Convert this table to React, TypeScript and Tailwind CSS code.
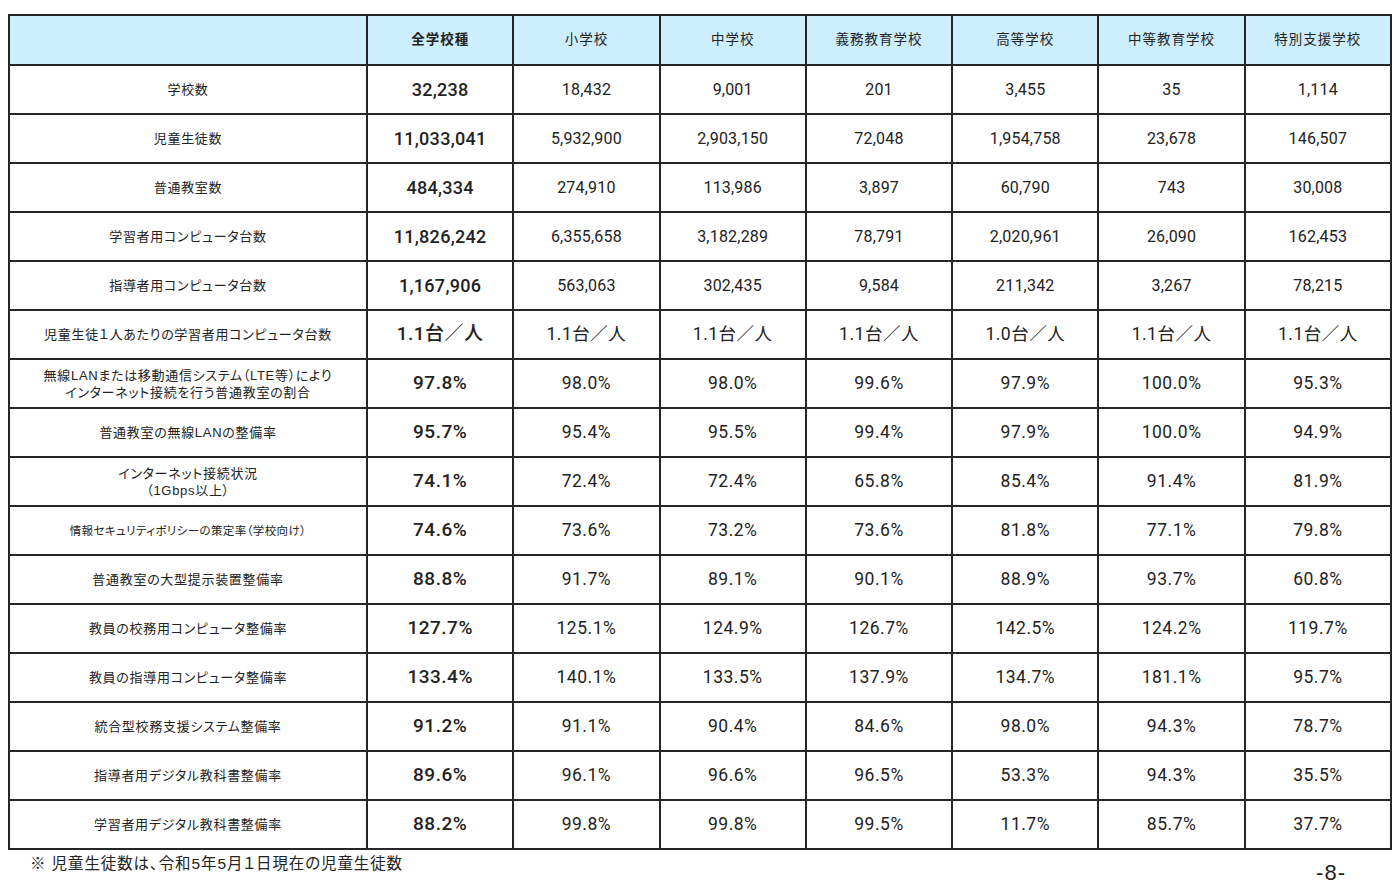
import React from 'react';

const columns = ['全学校種', '小学校', '中学校', '義務教育学校', '高等学校', '中等教育学校', '特別支援学校'];

interface Row {
  label: string[];
  values: string[];
  kind: 'count' | 'rate';
  small?: boolean;
}

const rows: Row[] = [
  { label: ['学校数'], kind: 'count', values: ['32,238', '18,432', '9,001', '201', '3,455', '35', '1,114'] },
  { label: ['児童生徒数'], kind: 'count', values: ['11,033,041', '5,932,900', '2,903,150', '72,048', '1,954,758', '23,678', '146,507'] },
  { label: ['普通教室数'], kind: 'count', values: ['484,334', '274,910', '113,986', '3,897', '60,790', '743', '30,008'] },
  { label: ['学習者用コンピュータ台数'], kind: 'count', values: ['11,826,242', '6,355,658', '3,182,289', '78,791', '2,020,961', '26,090', '162,453'] },
  { label: ['指導者用コンピュータ台数'], kind: 'count', values: ['1,167,906', '563,063', '302,435', '9,584', '211,342', '3,267', '78,215'] },
  { label: ['児童生徒１人あたりの学習者用コンピュータ台数'], kind: 'rate', values: ['1.1台／人', '1.1台／人', '1.1台／人', '1.1台／人', '1.0台／人', '1.1台／人', '1.1台／人'] },
  { label: ['無線LANまたは移動通信システム（LTE等）により', 'インターネット接続を行う普通教室の割合'], kind: 'rate', values: ['97.8%', '98.0%', '98.0%', '99.6%', '97.9%', '100.0%', '95.3%'] },
  { label: ['普通教室の無線LANの整備率'], kind: 'rate', values: ['95.7%', '95.4%', '95.5%', '99.4%', '97.9%', '100.0%', '94.9%'] },
  { label: ['インターネット接続状況', '（1Gbps以上）'], kind: 'rate', values: ['74.1%', '72.4%', '72.4%', '65.8%', '85.4%', '91.4%', '81.9%'] },
  { label: ['情報セキュリティポリシーの策定率（学校向け）'], kind: 'rate', small: true, values: ['74.6%', '73.6%', '73.2%', '73.6%', '81.8%', '77.1%', '79.8%'] },
  { label: ['普通教室の大型提示装置整備率'], kind: 'rate', values: ['88.8%', '91.7%', '89.1%', '90.1%', '88.9%', '93.7%', '60.8%'] },
  { label: ['教員の校務用コンピュータ整備率'], kind: 'rate', values: ['127.7%', '125.1%', '124.9%', '126.7%', '142.5%', '124.2%', '119.7%'] },
  { label: ['教員の指導用コンピュータ整備率'], kind: 'rate', values: ['133.4%', '140.1%', '133.5%', '137.9%', '134.7%', '181.1%', '95.7%'] },
  { label: ['統合型校務支援システム整備率'], kind: 'rate', values: ['91.2%', '91.1%', '90.4%', '84.6%', '98.0%', '94.3%', '78.7%'] },
  { label: ['指導者用デジタル教科書整備率'], kind: 'rate', values: ['89.6%', '96.1%', '96.6%', '96.5%', '53.3%', '94.3%', '35.5%'] },
  { label: ['学習者用デジタル教科書整備率'], kind: 'rate', values: ['88.2%', '99.8%', '99.8%', '99.5%', '11.7%', '85.7%', '37.7%'] },
];

const App: React.FC = () => {
  return (
    <div className="w-[1400px] h-[886px] bg-white text-[#222] font-['Liberation_Sans','Noto_Sans_CJK_JP',sans-serif] pt-[14px] pl-[8px]">
      {/* 表 */}
      <div className="w-[1384px] grid grid-cols-[356px_repeat(7,minmax(0,1fr))] gap-[2px] p-[2px] bg-[#262626]">
        <div className="h-[48px] bg-[#cdeefd]" />
        {columns.map((col, i) => (
          <div
            key={col}
            className={`h-[48px] bg-[#cdeefd] flex items-center justify-center text-[13.5px] tracking-[1px] [font-feature-settings:'palt'] ${
              i === 0 ? 'font-bold' : ''
            }`}
          >
            {col}
          </div>
        ))}

        {rows.map((row) => (
          <React.Fragment key={row.label.join('')}>
            <div
              className={`h-[47px] bg-white flex flex-col items-center justify-center text-center [font-feature-settings:'palt'] ${
                row.small ? 'text-[11.5px] tracking-[0.4px] leading-[16px]' : 'text-[13px] tracking-[0.7px] leading-[17px]'
              }`}
            >
              {row.label.map((line) => (
                <span key={line}>{line}</span>
              ))}
            </div>
            {row.values.map((v, i) => (
              <div
                key={i}
                className={`h-[47px] bg-white flex items-center justify-center font-['Roboto','Noto_Sans_CJK_JP',sans-serif] ${
                  i === 0
                    ? row.kind === 'count'
                      ? 'text-[18px] font-medium tracking-[0.3px]'
                      : 'text-[19px] font-medium tracking-[0.5px]'
                    : row.kind === 'count'
                    ? 'text-[16px] font-normal tracking-[0.2px]'
                    : 'text-[17.5px] font-normal tracking-[0.5px]'
                }`}
              >
                {v}
              </div>
            ))}
          </React.Fragment>
        ))}
      </div>

      {/* 注記とページ番号 */}
      <div className="w-[1384px] flex justify-between items-start">
        <p className="mt-[4px] ml-[22px] text-[15.5px] leading-[20px] tracking-[0.9px] [font-feature-settings:'palt']">
          ※ 児童生徒数は、令和5年5月１日現在の児童生徒数
        </p>
        <p className="mt-[10px] mr-[46px] text-[22px] leading-[26px] tracking-[1px]">-8-</p>
      </div>
    </div>
  );
};

export default App;
